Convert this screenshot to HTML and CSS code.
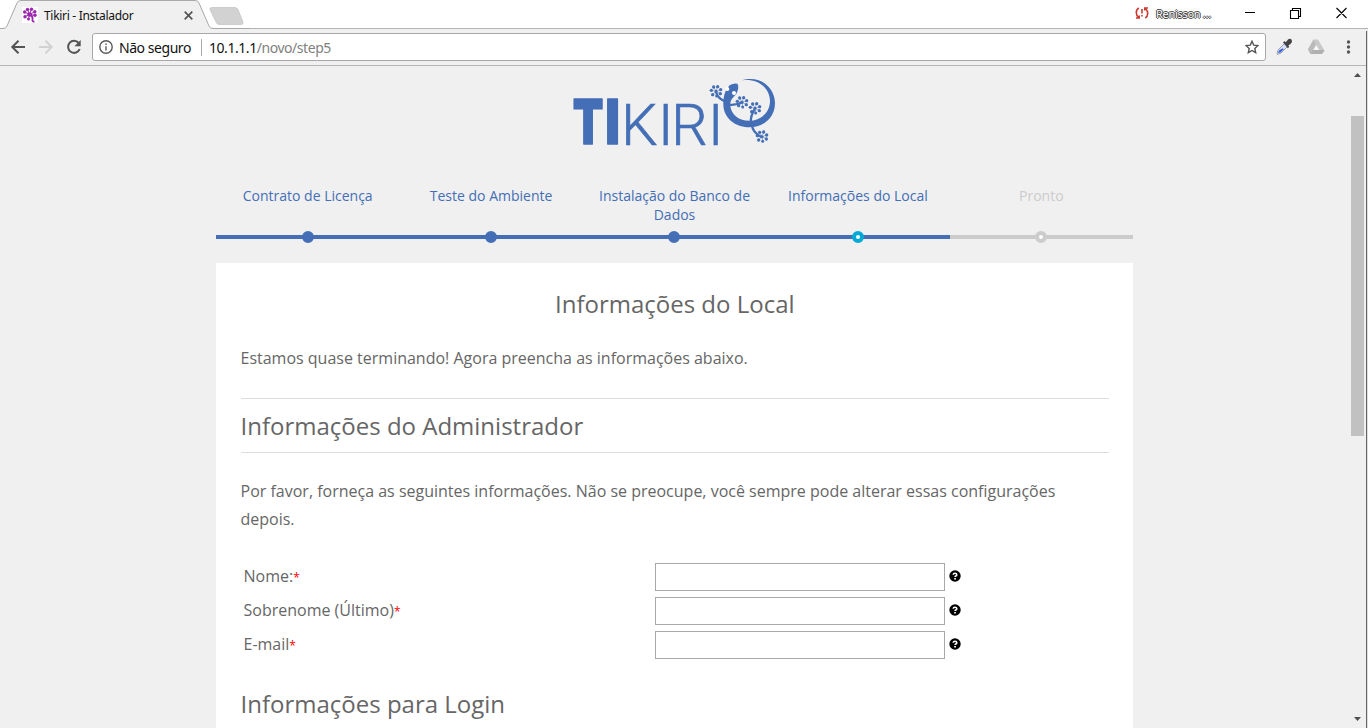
FILE: index.html
```html
<!DOCTYPE html>
<html lang="pt-BR">
<head>
<meta charset="utf-8">
<title>Tikiri - Instalador</title>
<link rel="stylesheet" href="styles.css">
</head>
<body>
<svg class="defs" width="0" height="0" aria-hidden="true">
  <defs>
    <g id="foot"><circle r="4.500"/><circle cx="-14" cy="-3" r="5"/><circle cx="-7" cy="-13" r="5"/><circle cx="5" cy="-14" r="5"/><circle cx="14" cy="-5" r="5"/><circle cx="13" cy="7" r="5"/><circle cx="-10" cy="10" r="5"/><circle cx="2" cy="14" r="4.500"/><path d="M-14-3L0 0L-7-13M5-14L0 0L14-5M13 7L0 0L-10 10M2 14L0 0" fill="none" stroke="currentColor" stroke-width="1.500"/></g>
    <symbol id="help" viewBox="0 0 12 12"><circle cx="6" cy="6" r="5.700"/><path d="M4.200 4.800Q4.300 3.200 6 3.200T7.800 4.700Q7.800 5.500 6.800 6Q6.100 6.400 6.100 7.100" fill="none" stroke="#fff" stroke-width="1.600"/><path d="M5.200 8h1.700v1.500H5.200z" fill="#fff"/></symbol>
  </defs>
</svg>
<div class="window">
  <header class="titlebar">
    <svg class="tab-shape" width="250" height="29" viewBox="0 0 250 29"><path d="M0 28.500H3Q6 28.500 7 26L17 3Q18 .5 21 .5H195Q198 .5 199 3L209 26Q210 28.500 213 28.500H250V29H0Z" fill="#f0f0f0"/><path d="M0 28.500H3Q6 28.500 7 26L17 3Q18 .5 21 .5H195Q198 .5 199 3L209 26Q210 28.500 213 28.500H250" fill="none" stroke="#a9a9a9"/><path d="M212 7.500H235Q237 7.500 238 9.500L243 22Q243.500 24.500 241 24.500H219Q217 24.500 216 22L210 9.500Q209.500 7.500 212 7.500Z" fill="#d2d2d2" stroke="#c2c2c2" stroke-width=".7"/></svg>
    <div class="tab">
      <svg class="favicon" width="16" height="16" viewBox="0 0 16 16" fill="#9c27b0"><rect width="16" height="16" fill="#fff"/><circle cx="7.500" cy="7.500" r="2.200"/><circle cx="2.700" cy="5" r="1.700"/><circle cx="5.500" cy="2.500" r="1.700"/><circle cx="9.500" cy="2.300" r="1.700"/><circle cx="12.800" cy="4.700" r="1.700"/><circle cx="13" cy="8.300" r="1.700"/><circle cx="3" cy="9.700" r="1.700"/><circle cx="6.500" cy="12" r="1.500"/><path d="M2.700 5L7.500 7.500L5.500 2.500M9.500 2.300L7.500 7.500L12.800 4.700M13 8.300L7.500 7.500L3 9.700M6.500 12L7.500 7.500" fill="none" stroke="#9c27b0"/><path d="M8 8Q11 9 10.500 12T12.500 14.500" fill="none" stroke="#9c27b0" stroke-width="1.800"/></svg>
      <span class="tab-title">Tikiri - Instalador</span>
      <svg class="tab-close" width="9" height="9" viewBox="0 0 9 9"><path d="M.7 .7L8.300 8.300M8.300 .7L.7 8.300" stroke="#555" stroke-width="1.700"/></svg>
    </div>
    <div class="controls">
      <svg width="14" height="12" viewBox="0 0 14 12" fill="none" stroke="#cc3a30" stroke-width="1.600"><path d="M3.800 1Q1.300 2.500 1.300 5.500Q1.300 8.500 3.600 10.500M1 11H4.200V8.500M10.200 11Q12.700 9.500 12.700 6.500Q12.700 3.500 10.400 1.500M13 1H9.800V3.500M7 2V6.500M7 8V9.600"/></svg>
      <span class="user">Renisson ...</span>
      <svg class="win-buttons" width="104" height="14" viewBox="0 0 104 14" fill="none" stroke="#000"><path d="M0 6.500H10M45.500 4.500H53.500V12.500H45.500ZM47.500 4V2.500H55.500V10.500H54M91.500 2L101.500 12M101.500 2L91.500 12" stroke-width="1.100"/></svg>
    </div>
  </header>
  <div class="toolbar">
    <svg class="nav" width="74" height="18" viewBox="0 0 74 18" fill="none" stroke-width="2"><path d="M15 9H3M8.500 2.800L2.300 9L8.500 15.200" stroke="#555"/><path d="M29 9H41M35.500 2.800L41.700 9L35.500 15.200" stroke="#d2d2d2"/><path d="M68.700 5A6 6 0 1 0 69.700 11" stroke="#555"/><path d="M70.700 2V8.300H64.400Z" fill="#555" stroke="none"/></svg>
    <div class="address">
      <svg width="14" height="14" viewBox="0 0 14 14" fill="none" stroke="#5a5a5a" stroke-width="1.400"><circle cx="7" cy="7" r="6.200"/><path d="M7 6.200V10.500M7 3.400V4.900"/></svg>
      <span class="secure">Não seguro</span>
      <span class="url">10.1.1.1<span class="path">/novo/step5</span></span>
      <svg class="star" width="14" height="14" viewBox="0 0 14 14"><path d="M7 1.200L8.700 5.100L13 5.500L9.800 8.400L10.700 12.700L7 10.500L3.300 12.700L4.200 8.400L1 5.500L5.300 5.100Z" fill="none" stroke="#555" stroke-width="1.400"/></svg>
    </div>
    <svg class="extensions" width="76" height="20" viewBox="0 0 76 20"><g transform="translate(-1 0)"><path d="M2 16.500L3 13L9.500 6.500L12.500 9.500L6 16L2.500 17.500Z" fill="#d9e2fa" stroke="#8a8f99" stroke-width=".8"/><path d="M3 16L4 13.500L7 11.500L9 12L5.500 15.500Z" fill="#3f63e0"/><path d="M8 5.500L9.500 4L10.800 5.200L13 2.500Q15.500 1 16.700 3T15.500 7L13.300 8.500L14.300 9.700L12.800 11.200Z" fill="#444"/></g><path d="M37.500 2.500H42L48.500 13.500L46 17H34.500L32 12.500Z" fill="#c9c9c9"/><path d="M37.500 2.500L32 12.500L34.500 17L40 7.500Z" fill="#bababa"/><path d="M40.200 8L37.300 13H43.200Z" fill="#f7f7f7"/><path d="M34.500 17L37 13H48.500L46 17Z" fill="#b0b0b0"/><g fill="#555"><circle cx="72.500" cy="5" r="1.700"/><circle cx="72.500" cy="10" r="1.700"/><circle cx="72.500" cy="15" r="1.700"/></g></svg>
  </div>
  <div class="viewport">
    <main class="page">
      <svg class="logo" width="230" height="85" viewBox="0 0 690 255" fill="#446eb6" color="#446eb6">
        <g class="logo-bold"><text x="38" y="223" textLength="92" lengthAdjust="spacingAndGlyphs">T</text><text x="136" y="223" textLength="44" lengthAdjust="spacingAndGlyphs">I</text></g>
        <text class="logo-light" y="224" x="184 294 334 444">KIRI</text>
        <path d="M545 31C604 13 645 56 645 99C645 142 612 172 568 172C523 172 490 142 490 103C490 76 496 60 509 46Q520 39 532 41Q537 48 533 62Q530 74 520 82C512 90 510 98 511 108C514 135 537 152 568 152C602 152 630 128 630 93C630 54 593 23 545 31Z"/>
        <g fill="#fff"><circle cx="502" cy="57" r="6"/><circle cx="522" cy="69" r="6"/></g>
        <path d="M468 66Q474 88 500 96M503 104Q530 107 547 97M573 160Q570 138 584 118M576 166Q578 187 604 201" fill="none" stroke="#446eb6" stroke-width="7"/>
        <use href="#foot" x="468" y="64"/><use href="#foot" x="546" y="97"/><use href="#foot" x="585" y="115"/><use href="#foot" x="606" y="200"/>
      </svg>
      <ol class="steps">
        <li class="done"><span>Contrato de Licença</span></li>
        <li class="done"><span>Teste do Ambiente</span></li>
        <li class="done"><span>Instalação do Banco de Dados</span></li>
        <li class="current"><span>Informações do Local</span></li>
        <li><span>Pronto</span></li>
      </ol>
      <section class="card">
        <h1>Informações do Local</h1>
        <p class="intro">Estamos quase terminando! Agora preencha as informações abaixo.</p>
        <h2 class="ruled">Informações do Administrador</h2>
        <p class="note">Por favor, forneça as seguintes informações. Não se preocupe, você sempre pode alterar essas configurações depois.</p>
        <form class="fields">
          <div class="field"><label for="nome">Nome:<i>*</i></label><input id="nome"><svg width="12" height="12"><use href="#help"/></svg></div>
          <div class="field"><label for="sobrenome">Sobrenome (Último)<i>*</i></label><input id="sobrenome"><svg width="12" height="12"><use href="#help"/></svg></div>
          <div class="field"><label for="email">E-mail<i>*</i></label><input id="email"><svg width="12" height="12"><use href="#help"/></svg></div>
        </form>
        <h2>Informações para Login</h2>
      </section>
    </main>
    <div class="scrollbar">
      <svg width="7" height="4" viewBox="0 0 7 4"><path d="M0 4L3.500 0L7 4Z" fill="#505050"/></svg>
      <div class="thumb"></div>
      <svg class="down" width="7" height="4" viewBox="0 0 7 4"><path d="M0 0L3.500 4L7 0Z" fill="#505050"/></svg>
    </div>
  </div>
</div>
<div class="window-edge"></div>
</body>
</html>
```
FILE: styles.css
```css
*, *::after { box-sizing: border-box; }
body { margin: 0; width: 1368px; height: 728px; overflow: hidden; background: #f0f0f0; font-family: "Open Sans", sans-serif; position: relative; }
.defs { position: absolute; }
.window { width: 1368px; height: 728px; display: flex; flex-direction: column; }
.titlebar { height: 29px; flex: none; display: flex; justify-content: space-between; background: #fff; border-bottom: 1px solid #b5b5b5; position: relative; }
.tab-shape { position: absolute; left: 0; top: 0; }
.tab { position: relative; display: flex; align-items: center; padding: 1px 0 0 22px; width: 200px; height: 29px; }
.tab-title { margin-left: 6px; font: 12px "Noto Sans", sans-serif; color: #111; letter-spacing: -.3px; width: 90px; white-space: nowrap; }
.tab-close { margin-left: 50px; }
.controls { display: flex; align-items: center; height: 26px; padding-right: 19px; }
.user { margin-left: 7px; width: 57px; font: 11px "Noto Sans", sans-serif; letter-spacing: -.3px; color: #fff; white-space: nowrap; text-shadow: 1px 0 #444, -1px 0 #444, 0 1px #444, 0 -1px #444; }
.win-buttons { margin-left: 32px; }
.toolbar { height: 37px; flex: none; display: flex; align-items: center; padding-left: 10px; border-bottom: 1px solid #b5b5b5; }
.nav { flex: none; }
.address { margin-left: 8px; width: 1174px; height: 28px; display: flex; align-items: center; padding: 0 6px; background: #fff; border: 1px solid #a8a8a8; border-radius: 3px; font: 14px "Noto Sans", sans-serif; color: #111; white-space: nowrap; }
.secure { margin-left: 6px; width: 83px; height: 17px; line-height: 17px; letter-spacing: -.45px; border-right: 1px solid #aaa; }
.url { margin-left: 7px; letter-spacing: -.45px; }
.path { color: #808080; }
.star { margin-left: auto; }
.extensions { margin-left: 10px; }
.viewport { flex: 1; min-height: 0; display: flex; overflow: hidden; }
.page { width: 917px; margin-left: 216px; flex: none; }
.logo { display: block; margin: 4px 0 0 344px; }
.logo-bold text { font: 900 186px Inter, sans-serif; stroke: #446eb6; stroke-width: 4px; stroke-linejoin: round; }
.logo-light { font: 300 172px Roboto, sans-serif; stroke: #446eb6; stroke-width: 2px; }
.steps { list-style: none; margin: 31px 0 0; padding: 0; height: 77px; display: grid; grid-template-columns: repeat(5, 1fr); font-size: 14px; line-height: 19px; color: #ccc; }
.steps li { position: relative; height: 53px; border-bottom: 4px solid #ccc; text-align: center; padding: 0 14px; }
.steps li::after { content: ""; position: absolute; left: calc(50% - 6px); bottom: -8px; width: 12px; height: 12px; border: 4px solid #ccc; border-radius: 50%; background: #fff; }
.steps .done, .steps .current { color: #446eb6; border-color: #446eb6; }
.steps .done::after { border-color: #446eb6; background: #446eb6; }
.steps .current::after { border-color: #00a9d6; }
.card { height: 700px; background: #fff; padding: 24px 24px 24px 24.500px; color: #666; font-size: 16px; line-height: 28px; }
h1, h2 { margin: 0; font-size: 24px; line-height: 34px; font-weight: 400; }
h1 { text-align: center; }
.intro { margin: 23px 0 26px; }
.ruled { height: 55px; border-top: 1px solid #ddd; border-bottom: 1px solid #ddd; padding-top: 10px; }
.note { margin: 24px 0 30px; }
.fields { margin: 0 0 28px; padding: 0 3px; display: grid; gap: 6px; }
.field { display: grid; grid-template-columns: 411.500px 290px 16px; align-items: center; height: 28px; }
.field input { width: 290px; height: 28px; border: 1px solid #a9a9a9; background: #fff; padding: 0; }
.field svg { margin: -2px 0 0 4px; }
.field label { margin-top: -2px; }
.field label i { color: #f00; font-size: 12px; line-height: 1; font-style: normal; }
.scrollbar { width: 17px; margin-left: auto; margin-right: 2px; display: flex; flex-direction: column; align-items: center; padding: 7px 0 7px; }
.thumb { width: 13px; height: 320px; margin-top: 39px; background: #c1c1c1; }
.down { margin-top: auto; }
.window-edge { position: absolute; left: 1366px; top: 31px; width: 2px; height: 697px; background: #ddd; border-left: 1px solid #666; }
```
